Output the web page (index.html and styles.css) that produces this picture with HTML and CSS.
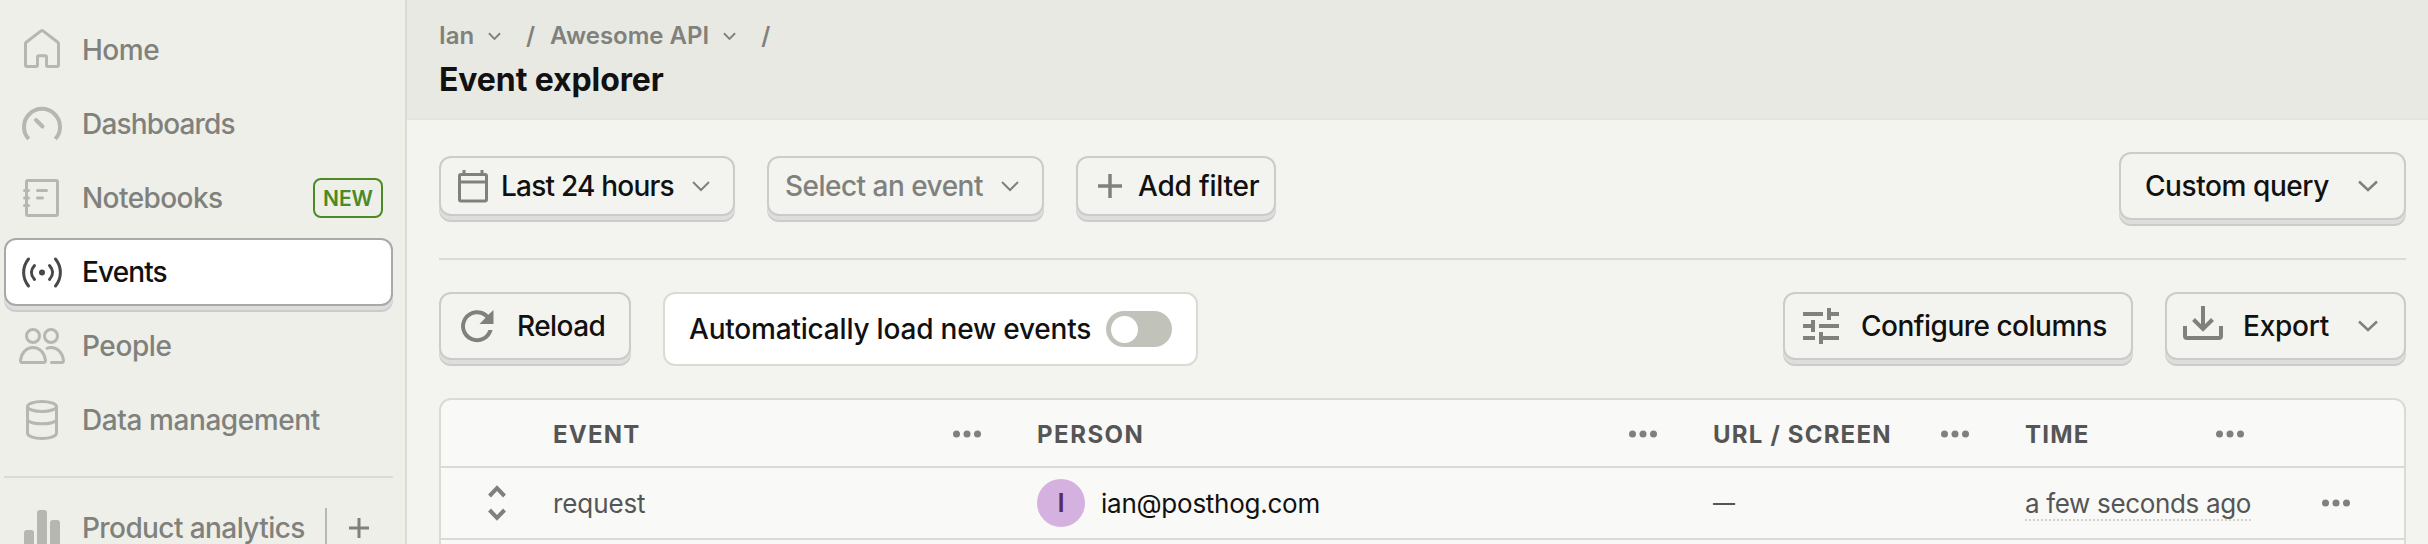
FILE: index.html
```html
<!DOCTYPE html>
<html lang="en">
<head>
<meta charset="utf-8">
<title>Event explorer</title>
<link rel="stylesheet" href="styles.css">
</head>
<body>
<div class="app">
  <nav class="sidebar">
    <a class="nav-item"><svg class="nav-icon" viewBox="0 0 48 48"><path d="M7.500 17.600c0-.6.3-1.100.7-1.400L23 4.900c.6-.4 1.400-.4 2 0l14.800 11.300c.4.300.7.8.7 1.400V39c0 .8-.7 1.500-1.500 1.500h-9c-.8 0-1.500-.7-1.500-1.500v-7.700c0-.8-.7-1.500-1.500-1.500h-6c-.8 0-1.500.7-1.500 1.500V39c0 .8-.7 1.500-1.500 1.500H9c-.8 0-1.500-.7-1.500-1.500z"/></svg><span class="t nav-label l-home">Home</span></a>
    <a class="nav-item"><svg class="nav-icon" viewBox="0 0 48 48"><g stroke-width="4"><path d="M10.700 39A18 18 0 1 1 37.300 39"/><path d="M18 20l6.500 6.500" stroke-linecap="round"/></g></svg><span class="t nav-label l-dash">Dashboards</span></a>
    <a class="nav-item"><svg class="nav-icon" viewBox="0 0 48 48"><rect x="8.500" y="6.500" width="31" height="35" rx="1.500"/><path d="M6.500 16.500h4M6.500 24h4M6.500 31.500h4M19.500 16.500h9M19.500 24h5" stroke-linecap="round"/></svg><span class="t nav-label l-note">Notebooks</span><span class="badge"><span class="t">NEW</span></span></a>
    <a class="nav-item nav-item-active"><svg class="nav-icon" viewBox="0 0 48 48"><circle class="solid" cx="24" cy="24.500" r="3"/><path d="M10.500 11c-6.500 8-6.500 19 0 27M37.500 11c6.500 8 6.500 19 0 27M16.500 17.500c-4 4.500-4 9.500 0 14M31.500 17.500c4 4.500 4 9.500 0 14" stroke-linecap="round"/></svg><span class="t nav-label l-events">Events</span></a>
    <a class="nav-item"><svg class="nav-icon" viewBox="0 0 48 48"><circle cx="15" cy="14" r="6.500"/><circle cx="33" cy="14" r="6.500"/><path d="M2.500 38.500C3.500 30.500 8.500 25.500 15 25.500s11.500 5 12.500 13c.1 1-.6 2-1.500 2H4c-1 0-1.600-1-1.500-2zM29 26.300c1.300-.5 2.600-.8 4-.8 6.500 0 11.500 5 12.500 13 .1 1-.6 2-1.500 2H33.500" stroke-linecap="round"/></svg><span class="t nav-label l-people">People</span></a>
    <a class="nav-item"><svg class="nav-icon" viewBox="0 0 48 48"><ellipse cx="24" cy="10.500" rx="14.500" ry="5"/><path d="M9.500 10.500v26.500c0 3 6 5.500 14.500 5.500s14.500-2.500 14.500-5.500V10.500M9.500 24.500c2.500 2 8 3.300 14.500 3.300s12-1.300 14.500-3.300"/></svg><span class="t nav-label l-data">Data management</span></a>
    <hr class="nav-rule">
    <a class="nav-item"><svg class="nav-icon" viewBox="0 0 48 48"><path class="solid" d="M6 44V29a3 3 0 0 1 3-3h4a3 3 0 0 1 3 3v15zM19 44V9a3 3 0 0 1 3-3h4a3 3 0 0 1 3 3v35zM32 44V19a3 3 0 0 1 3-3h4a3 3 0 0 1 3 3v25z"/></svg><span class="t nav-label l-prod">Product analytics</span><span class="nav-add"><svg class="plus-small" viewBox="0 0 20 20"><path d="M0 10h20M10 0v20"/></svg></span></a>
  </nav>
  <main class="main">
    <header class="header">
      <div class="crumbs">
        <span class="t crumb">Ian</span><svg class="chev-s" viewBox="0 0 14 9"><path d="M1 1l6 6 6-6"/></svg><span class="crumb slash">/</span>
        <span class="t crumb">Awesome API</span><svg class="chev-s" viewBox="0 0 14 9"><path d="M1 1l6 6 6-6"/></svg><span class="crumb slash">/</span>
      </div>
      <h1 class="title"><span class="t">Event explorer</span></h1>
    </header>
    <section class="content">
      <div class="filters">
        <button class="btn btn-short btn-date"><svg class="i-cal" viewBox="0 0 30 33"><rect x="1.500" y="4.500" width="27" height="26.500" rx="1.500"/><path d="M1.500 12H28.500M6 0v4M24 0v4"/></svg><span class="t">Last 24 hours</span><svg class="chev" viewBox="0 0 18 11"><path d="M1 1l8 8 8-8"/></svg></button>
        <button class="btn btn-short btn-select"><span class="t">Select an event</span><svg class="chev" viewBox="0 0 18 11"><path d="M1 1l8 8 8-8"/></svg></button>
        <button class="btn btn-short btn-add"><svg class="i-plus" viewBox="0 0 24 24"><path d="M0 12h24M12 0v24"/></svg><span class="t">Add filter</span></button>
        <button class="btn btn-query"><span class="t">Custom query</span><svg class="chev chev-bold" viewBox="0 0 20 12"><path d="M1 1.500l9 8.500 9-8.500"/></svg></button>
      </div>
      <hr class="rule">
      <div class="actions">
        <button class="btn btn-reload"><svg class="i-reload" viewBox="0 0 33 33"><path class="solid" d="M27.300 4.800A16 16 0 1 0 31.600 20h-4.200A12 12 0 1 1 24.500 7.700L18.500 14H32.500V0z"/></svg><span class="t">Reload</span></button>
        <div class="auto"><span class="t">Automatically load new events</span><span class="toggle"><span class="knob"></span></span></div>
        <button class="btn btn-config"><svg class="i-tune" viewBox="0 0 36 36"><path d="M0 6h20M26 0v12M26 6h10M0 18h10M10 12v12M16 18h20M0 30h12M18 24v12M18 30h18"/></svg><span class="t">Configure columns</span></button>
        <button class="btn btn-export"><svg class="i-export" viewBox="0 0 40 34"><path d="M20 0v23M10.500 13.500L20 23l9.500-9.500M2 20v10c0 1.100.9 2 2 2h32c1.100 0 2-.9 2-2V20"/></svg><span class="t">Export</span><svg class="chev chev-bold" viewBox="0 0 20 12"><path d="M1 1.500l9 8.500 9-8.500"/></svg></button>
      </div>
      <div class="table">
        <div class="row head">
          <div></div>
          <div class="cell"><span class="t">EVENT</span><svg class="dots" viewBox="0 0 28 8"><circle cx="3.500" cy="4" r="3.500"/><circle cx="14" cy="4" r="3.500"/><circle cx="24.500" cy="4" r="3.500"/></svg></div>
          <div class="cell"><span class="t h-person">PERSON</span><svg class="dots" viewBox="0 0 28 8"><circle cx="3.500" cy="4" r="3.500"/><circle cx="14" cy="4" r="3.500"/><circle cx="24.500" cy="4" r="3.500"/></svg></div>
          <div class="cell"><span class="t">URL / SCREEN</span><svg class="dots" viewBox="0 0 28 8"><circle cx="3.500" cy="4" r="3.500"/><circle cx="14" cy="4" r="3.500"/><circle cx="24.500" cy="4" r="3.500"/></svg></div>
          <div class="cell"><span class="t">TIME</span><svg class="dots" viewBox="0 0 28 8"><circle cx="3.500" cy="4" r="3.500"/><circle cx="14" cy="4" r="3.500"/><circle cx="24.500" cy="4" r="3.500"/></svg></div>
          <div></div>
        </div>
        <div class="row body-row">
          <div class="expander"><svg class="i-expand" viewBox="0 0 18 36"><path d="M1.500 11L9 3.200l7.500 7.800M1.500 25L9 32.800l7.500-7.800"/></svg></div>
          <div class="cell"><span class="t r-event">request</span></div>
          <div class="cell"><span class="avatar">I</span><span class="t r-person">ian@posthog.com</span></div>
          <div class="cell"><span class="t r-url">—</span></div>
          <div class="cell"><span class="t r-time">a few seconds ago</span></div>
          <div class="row-menu"><svg class="dots" viewBox="0 0 28 8"><circle cx="3.500" cy="4" r="3.500"/><circle cx="14" cy="4" r="3.500"/><circle cx="24.500" cy="4" r="3.500"/></svg></div>
        </div>
      </div>
    </section>
  </main>
</div>
</body>
</html>
```
FILE: styles.css
```css
* { box-sizing: border-box; }
body { margin: 0; background: #f3f4ef; color: #111; font-family: Inter, "Liberation Sans", sans-serif; }
svg { display: block; flex: none; fill: none; stroke: currentColor; }
.solid { fill: currentColor; stroke: none; }
.t { white-space: nowrap; }
.app { display: flex; height: 544px; overflow: hidden; }

.sidebar { width: 407px; flex: none; padding: 16px 12px 0 4px; background: #eeefe9; border-right: 2px solid #dadbd2; }
.nav-item { display: flex; align-items: center; height: 68px; margin-bottom: 6px; padding: 0 8px 0 12px; border: 2px solid transparent; border-radius: 12px; color: #80817c; }
.nav-icon { width: 48px; height: 48px; margin-right: 16px; stroke-width: 3; color: #b6b7b1; }
.nav-label { font-size: 28px; line-height: 40px; font-weight: 540; }
.l-home { letter-spacing: -0.5px; }
.l-dash { letter-spacing: -0.83px; }
.l-note { letter-spacing: -0.57px; }
.l-events { letter-spacing: -0.88px; }
.l-people { letter-spacing: -0.42px; }
.l-data { letter-spacing: -0.42px; }
.l-prod { letter-spacing: -0.59px; }
.nav-item-active { background: #fff; border-color: #a9a9a9; color: #111; box-shadow: 0 4px 0 #dedddd, 0 6px 0 #cbcbcb; }
.nav-item-active .nav-icon { color: #484848; }
.badge { display: flex; align-items: center; justify-content: center; width: 70px; height: 40px; margin-left: auto; border: 2px solid #4b8a24; border-radius: 8px; color: #4b8a24; font-size: 21px; font-weight: 600; }
.nav-rule { height: 2px; margin: 22px 0 16px; border: 0; background: #dadbd2; }
.nav-add { display: flex; align-items: center; height: 40px; margin-left: auto; padding-left: 22px; margin-right: 14px; border-left: 2px solid #b6b7b1; }
.plus-small { width: 20px; height: 20px; stroke-width: 3; }

.main { flex: 1; min-width: 0; }
.header { height: 120px; padding: 22px 32px 0; background: #e8e9e3; border-bottom: 2px solid #e4e5de; }
.crumbs { display: flex; align-items: center; height: 28px; color: #80817c; }
.crumb { font-size: 24px; line-height: 28px; font-weight: 600; }
.chev-s { width: 13px; height: 9px; margin: 0 25px 0 14px; stroke-width: 2; }
.slash { width: 24px; }
.title { margin: 8px 0 0; font-size: 32px; line-height: 44px; font-weight: 700; letter-spacing: -0.1px; }
.content { padding: 32px 22px 0 32px; }
.filters { display: flex; align-items: center; height: 74px; }
.btn { display: flex; align-items: center; height: 68px; margin: 0 0 6px; padding: 0; border: 2px solid #cbcbcb; border-radius: 12px; background: #f3f4ef; box-shadow: 0 4px 0 #dfdedd, 0 6px 0 #cbcbcb; font: 540 28px/40px Inter, "Liberation Sans", sans-serif; color: #111; }
.btn svg { color: #80817e; }
.btn-short { height: 60px; }
.btn-date { width: 296px; margin-right: 32px; padding-left: 17px; letter-spacing: -0.78px; }
.btn-select { width: 277px; margin-right: 32px; padding-left: 16px; color: #80817e; letter-spacing: -0.52px; }
.btn-add { width: 200px; padding-left: 20px; letter-spacing: -0.2px; }
.btn-query { width: 287px; margin-left: auto; padding-left: 24px; letter-spacing: -0.42px; }
.chev { width: 18px; height: 11px; margin: 0 23px 0 auto; stroke-width: 2; }
.chev-bold { width: 20px; height: 12px; margin-right: 26px; stroke-width: 2.500; }
.i-cal { width: 30px; height: 33px; margin-right: 13px; stroke-width: 3; }
.i-plus { width: 24px; height: 24px; margin-right: 16px; stroke-width: 3.500; }
.rule { height: 2px; margin: 32px 0; border: 0; background: #dadbd2; }
.actions { display: flex; height: 74px; }
.btn-reload { width: 192px; margin-right: 32px; padding-left: 20px; letter-spacing: -0.57px; }
.i-reload { width: 33px; height: 33px; margin-right: 23px; }
.auto { display: flex; align-items: center; width: 535px; padding-left: 24px; border: 2px solid #dadbd2; border-radius: 12px; background: #fff; font-size: 28px; font-weight: 520; letter-spacing: -0.2px; }
.toggle { display: flex; align-items: center; width: 66px; height: 36px; margin: 0 24px 0 auto; padding: 0 5px; border-radius: 18px; background: #c1c2b9; }
.knob { width: 27px; height: 27px; border-radius: 50%; background: #fff; }
.btn-config { width: 350px; margin-left: auto; padding-left: 18px; letter-spacing: -0.5px; }
.i-tune { width: 36px; height: 36px; margin-right: 22px; stroke-width: 4; }
.btn-export { width: 241px; margin-left: 32px; padding-left: 16px; letter-spacing: -0.23px; }
.i-export { width: 40px; height: 34px; margin-right: 20px; margin-top: -6px; stroke-width: 4; }

.table { margin-top: 32px; height: 200px; border: 2px solid #dadbd2; border-radius: 12px; background: #f9f9f7; }
.row { display: grid; grid-template-columns: 96px 484px 676px 312px 275px 1fr; border-bottom: 2px solid #dadbd2; color: #555; }
.cell { display: flex; align-items: center; padding-left: 16px; }
.head { height: 68px; padding-top: 2px; font-size: 24px; font-weight: 700; letter-spacing: 1.200px; }
.h-person { letter-spacing: 1.500px; }
.body-row { height: 72px; font-size: 26px; }
.dots { width: 28px; height: 8px; margin: 0 40px 0 auto; fill: #80817e; stroke: none; }
.row-menu, .expander { display: flex; align-items: center; }
.row-menu .dots { margin-right: 54px; }
.i-expand { width: 18px; height: 36px; margin-left: 47px; stroke-width: 4; color: #80817e; }
.avatar { width: 48px; height: 48px; margin-right: 16px; border-radius: 50%; background: #d5b1e0; color: #572b62; font-weight: 600; line-height: 48px; text-align: center; }
.r-event { letter-spacing: -0.1px; }
.r-person { color: #111; letter-spacing: -0.25px; }
.r-url { font-size: 22px; font-weight: 500; }
.r-time { padding-top: 3px; line-height: 31px; letter-spacing: -0.34px; border-bottom: 2px dotted #d0d1cb; }
```
